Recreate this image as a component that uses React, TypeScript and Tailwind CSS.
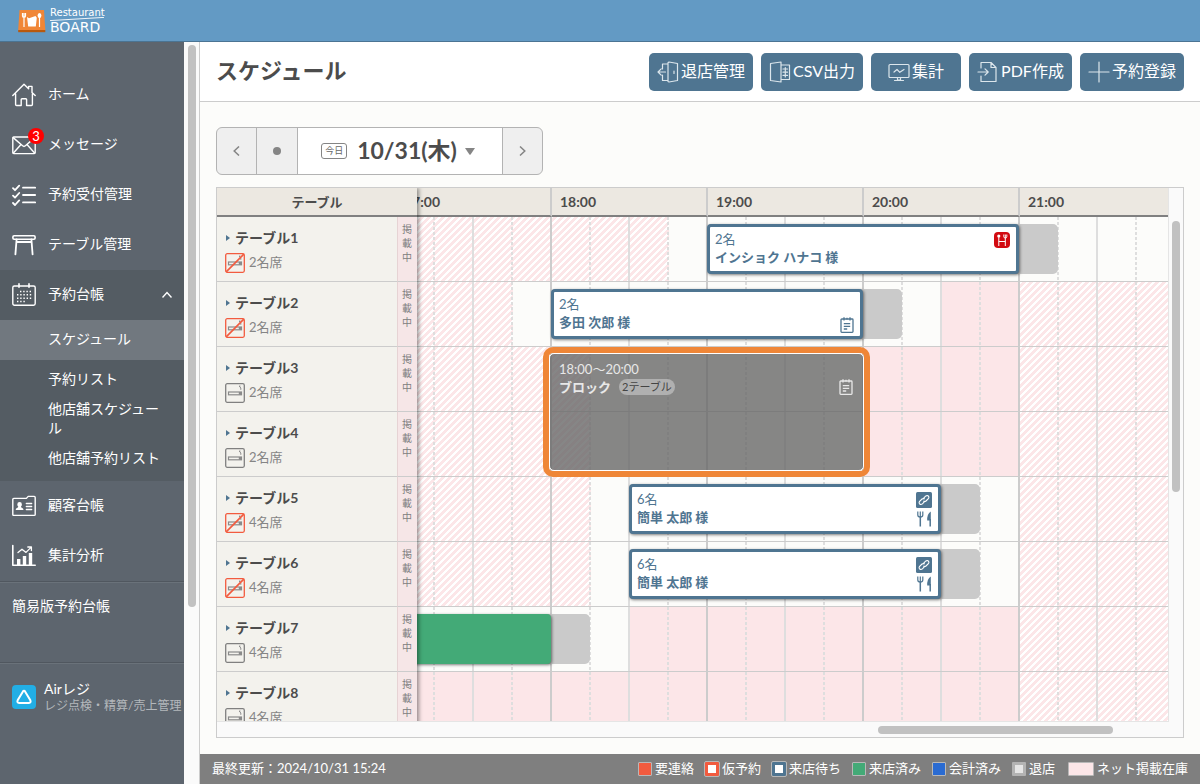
import React from "react";
import type { ReactNode } from "react";

type Fill = "none" | "stripe" | "open";

type Booking = {
  start: number;
  span: number;
  kind: "waiting" | "seated";
  people?: string;
  name?: string;
  marks?: ("gourmet" | "note" | "link" | "cutlery")[];
};

type TableRow = {
  name: string;
  seats: string;
  smoking: boolean;
  // Each entry is [number of quarter hours, fill], counted from 17:00.
  stock: [number, Fill][];
  booking?: Booking;
  block?: boolean;
};

const QUARTER = 39;
const HOURS = [17, 18, 19, 20, 21];

const ROWS: TableRow[] = [
  { name: "テーブル1", seats: "2名席", smoking: false, stock: [[7, "stripe"], [13, "none"]], booking: { start: 8, span: 8, kind: "waiting", people: "2名", name: "インショク ハナコ 様", marks: ["gourmet"] } },
  { name: "テーブル2", seats: "2名席", smoking: false, stock: [[3, "stripe"], [11, "none"], [2, "open"], [4, "stripe"]], booking: { start: 4, span: 8, kind: "waiting", people: "2名", name: "多田 次郎 様", marks: ["note"] } },
  { name: "テーブル3", seats: "2名席", smoking: true, stock: [[5, "stripe"], [7, "none"], [4, "open"], [4, "stripe"]], block: true },
  { name: "テーブル4", seats: "2名席", smoking: true, stock: [[5, "stripe"], [7, "none"], [4, "open"], [4, "stripe"]] },
  { name: "テーブル5", seats: "4名席", smoking: false, stock: [[5, "stripe"], [11, "none"], [4, "stripe"]], booking: { start: 6, span: 8, kind: "waiting", people: "6名", name: "簡単 太郎 様", marks: ["link", "cutlery"] } },
  { name: "テーブル6", seats: "4名席", smoking: false, stock: [[5, "stripe"], [11, "none"], [4, "stripe"]], booking: { start: 6, span: 8, kind: "waiting", people: "6名", name: "簡単 太郎 様", marks: ["link", "cutlery"] } },
  { name: "テーブル7", seats: "4名席", smoking: true, stock: [[6, "none"], [10, "open"], [4, "stripe"]], booking: { start: 0, span: 4, kind: "seated" } },
  { name: "テーブル8", seats: "4名席", smoking: true, stock: [[16, "open"], [4, "stripe"]] },
];

const FILL_CLASS: Record<Fill, string> = {
  none: "bg-[#fcfcfa]",
  open: "bg-[#fce6e8]",
  stripe:
    "bg-white bg-[linear-gradient(-45deg,#fce6e8_22%,transparent_22%,transparent_50%,#fce6e8_50%,#fce6e8_72%,transparent_72%)] bg-[length:7px_7px]",
};

function lineClass(i: number) {
  if (i % 4 === 3) return "bg-[#cccccc]";
  if (i % 2 === 1) return "bg-[#dedede]";
  return "bg-[repeating-linear-gradient(to_bottom,#dedede_0px,#dedede_3px,transparent_3px,transparent_5px)]";
}

function NavIcon({ children }: { children: ReactNode }) {
  return (
    <svg className="size-6 shrink-0" viewBox="0 0 24 24" fill="none" stroke="white" strokeWidth="1.4" strokeLinejoin="round" strokeLinecap="round" aria-hidden="true">
      {children}
    </svg>
  );
}

const HomeIcon = () => (
  <NavIcon>
    <path d="M.8 12.5 12 1.2l4.6 4.6V3.4H20v6l3.2 3.1M3.6 11v10.5q0 1 1 1h4.6v-6q0-.8.8-.8h3.8q.8 0 .8.8v6h4.8q1 0 1-1V11" />
  </NavIcon>
);
const MailIcon = () => (
  <NavIcon>
    <rect x=".8" y="4" width="22.4" height="16.6" rx="1" />
    <path d="m1.2 4.6 9.4 8.2q1.4 1.2 2.8 0l9.4-8.2M1.4 20l7.4-8.2M22.6 20l-7.4-8.2" />
  </NavIcon>
);
const ChecklistIcon = () => (
  <NavIcon>
    <path strokeWidth="1.8" d="M11 4.7h12.2M11 12h12.2M11 19.4h12.2M1 5.2l2 2 4.2-4.6M1 12.6l2 2 4.2-4.6M1 20l2 2 4.2-4.6" />
  </NavIcon>
);
const TableIcon = () => (
  <NavIcon>
    <rect x=".9" y="2.8" width="22.2" height="3.4" rx="1.2" strokeWidth="1.6" />
    <path strokeWidth="1.8" d="M4.6 6.4 3.4 21.4M19.4 6.4l1.2 15M4.4 9h15.2" />
  </NavIcon>
);
const CalendarIcon = () => (
  <NavIcon>
    <rect x=".8" y="3" width="22.4" height="19.2" rx="1.6" />
    <path strokeWidth="1.6" d="M7 .9v3.4M17 .9v3.4" />
    <path strokeWidth="1.5" strokeDasharray="1.4 1.8" strokeLinecap="butt" d="M8 8.4h12M5 11.8h15M5 15.2h15M5 18.6h8.6" />
  </NavIcon>
);
const CustomerIcon = () => (
  <NavIcon>
    <path d="M1.8 4.4h12.6l1.8-2h6q1 0 1 1v17q0 1-1 1H1.8q-1 0-1-1v-15q0-1 1-1Z" />
    <path strokeWidth="1.5" d="M14.4 9.6h5.2M14.4 12.6h5.2M14.4 15.6h5.2" />
    <path fill="white" stroke="none" d="M7.6 8q2.3 0 2.3 2.4 0 1.4-1 2.4.2 1 1.4 1.3 1.2.4 1.2 2H3.7q0-1.6 1.2-2 1.2-.3 1.4-1.3-1-1-1-2.4Q5.3 8 7.6 8Z" />
  </NavIcon>
);
const ChartIcon = () => (
  <NavIcon>
    <path d="M.8 1.5v19.8h22.4" strokeWidth="1.6" />
    <path d="m6 8.6 4-3.4 4 3.2 5-5M15.8 3h3.6v3.6" strokeWidth="1.3" />
    <path fill="white" stroke="none" d="M5 15h3.4v6H5zM10.8 12h3.4v9h-3.4zM16.8 9h3.4v12h-3.4z" />
  </NavIcon>
);

function ToolIcon({ children }: { children: ReactNode }) {
  return (
    <svg className="size-[22px] shrink-0" viewBox="0 0 22 22" fill="none" stroke="#dce6ec" strokeWidth="1.2" strokeLinejoin="round" strokeLinecap="round" aria-hidden="true">
      {children}
    </svg>
  );
}

const ExitIcon = () => (
  <ToolIcon>
    <path d="M11 1.8 12 1l8.500 1.500v17L12 21l-1-.5ZM11 3H5.500v5M11 19.500H5.500V14M8.500 11H1.200M4.200 7.800 1 11l3.200 3.200M17 10v2.500" />
  </ToolIcon>
);
const CsvIcon = () => (
  <ToolIcon>
    <path d="M1.500 2.500 12 1v20L1.500 19.500ZM12 4h8.500v14.500H12M14 8h4.500M14 11.200h4.500M14 14.400h4.500M16.300 6.500v9.500" />
  </ToolIcon>
);
const MonitorIcon = () => (
  <ToolIcon>
    <rect x="1" y="3.500" width="20" height="13" rx="1" />
    <path d="m6 11 3-2.500 2.800 2.800L16 8.500M9.500 16.800v2.200h3v-2.200M6.500 19.500h9" />
  </ToolIcon>
);
const PdfIcon = () => (
  <ToolIcon>
    <path d="M4 7V1.500h10L19 6.500v14H4V15M14 1.500v5h5M1 11h10M8 7.800 11.200 11 8 14.200" />
  </ToolIcon>
);
const PlusIcon = () => (
  <ToolIcon>
    <path d="M11 1v20M1 11h20" />
  </ToolIcon>
);

function SmokingIcon({ allowed }: { allowed: boolean }) {
  return (
    <svg className="size-5" viewBox="0 0 20 20" fill="none" role="img" aria-label={allowed ? "喫煙" : "禁煙"}>
      <rect x=".7" y=".7" width="18.6" height="18.6" rx="1.500" stroke={allowed ? "#808080" : "#f25b3f"} strokeWidth="1.300" />
      <rect x="3.500" y="9" width="13" height="2.800" stroke="#8a8a8a" strokeWidth="1.200" />
      <path d="M13.800 9h2.700v2.800h-2.700z" fill="#8a8a8a" />
      <path d="M15.400 3h-1.200l1.600 2v1.800" stroke="#8a8a8a" />
      {!allowed && <path d="M1.200 18.800 18.800 1.200" stroke="#f25b3f" strokeWidth="1.700" />}
    </svg>
  );
}

function NoteIcon({ className }: { className: string }) {
  return (
    <svg className={className} viewBox="0 0 14 16" fill="none" stroke="currentColor" strokeWidth="1.300" aria-hidden="true">
      <rect x="1" y="2" width="12" height="13.300" rx=".8" />
      <path d="M4 .3v3.200M7 .8v1.600M10 .3v3.200M3.800 6.600h6.400M3.800 9.300h6.400M3.800 12h3.400" />
    </svg>
  );
}

function Mark({ kind }: { kind: "gourmet" | "note" | "link" | "cutlery" }) {
  if (kind === "gourmet")
    return (
      <svg className="size-4" viewBox="0 0 16 16" aria-hidden="true">
        <rect width="16" height="16" rx="4" fill="#d20a11" />
        <path d="M4.800 5v9M11.300 6v8M4.800 9.500h6.500M9.800 2.500v2.200q0 1.300 1.500 1.300t1.500-1.300V2.500M11.300 2.500V6" fill="none" stroke="white" strokeWidth="1" />
        <circle cx="4.800" cy="4" r="1.600" fill="white" />
      </svg>
    );
  if (kind === "link")
    return (
      <svg className="size-4" viewBox="0 0 16 16" aria-hidden="true">
        <rect width="16" height="16" rx="1.500" fill="#4f7591" />
        <path d="M7 6.800 9.600 4.200q1.200-1 2.600-.4 1.300 1.200.4 2.600L10 9q-1.200.9-2.300.2M9 9.200l-2.600 2.600q-1.200 1-2.600.4-1.300-1.200-.4-2.600L6 7q1.200-.9 2.300-.2" fill="none" stroke="white" strokeWidth="1.100" strokeLinecap="round" />
      </svg>
    );
  if (kind === "cutlery")
    return (
      <svg className="size-4" viewBox="0 0 16 16" fill="none" stroke="#4f7591" aria-hidden="true">
        <path d="M1.800.5v3.600q0 2 2.500 2t2.500-2V.5M4.300.5v5.600" strokeWidth="1.200" />
        <path d="M4.300 6v9.600M14.200 8v7.600" strokeWidth="1.500" />
        <path d="M14.800.4v9.200h-3.600q-.4-6.800 3.600-9.200Z" fill="#4f7591" stroke="none" />
      </svg>
    );
  return <NoteIcon className="h-4 w-[14px]" />;
}

function BookingCard({ booking }: { booking: Booking }) {
  // The grey tail is the one quarter hour kept free after the booking.
  const total = booking.span + 1;
  const cardWidth = `${(booking.span / total) * 100}%`;
  return (
    <div className="absolute top-[7px] -left-px z-10 h-[50px]" style={{ width: `${total * 100}%` }}>
      <div className="h-full rounded-[5px] bg-[#cacaca]" />
      {booking.kind === "seated" ? (
        <button type="button" aria-label="来店済み" className="absolute inset-y-0 left-0 rounded bg-[#43aa77] shadow-[1px_1px_3px_rgba(0,0,0,0.5)]" style={{ width: cardWidth }} />
      ) : (
        <button
          type="button"
          className="absolute inset-y-0 left-0 flex justify-between rounded border-3 border-[#4f7591] bg-white pt-[3px] pr-[6px] pl-[5px] text-left text-[13px] leading-[18px] text-[#4f7591] shadow-[1px_1px_3px_rgba(0,0,0,0.5)]"
          style={{ width: cardWidth }}
        >
          <span className="flex flex-col">
            <span>{booking.people}</span>
            <span className="font-bold">{booking.name}</span>
          </span>
          <span className={booking.marks?.[0] === "note" ? "flex h-full flex-col justify-end pb-[3px]" : "flex flex-col gap-[3px] pt-[2px]"}>
            {booking.marks?.map((m) => <Mark key={m} kind={m} />)}
          </span>
        </button>
      )}
    </div>
  );
}

function BlockCard() {
  return (
    <div className="absolute top-0 -left-[9px] z-10 h-[130px] w-[calc(800%+15px)] rounded-[10px] border-6 border-[#ef8637]">
      <button
        type="button"
        className="flex size-full items-start justify-between rounded-[5px] border border-white bg-[rgba(104,104,104,0.8)] pt-[6px] pr-[10px] pl-[9px] text-left text-[13px] leading-[18px] text-[#e8e8e8]"
      >
        <span className="flex flex-col">
          <span>18:00〜20:00</span>
          <span className="flex items-center gap-2 font-bold">
            ブロック
            <span className="rounded-full bg-[#b0b0b0] px-[3px] text-[11px] leading-4 font-normal text-[#444444]">2テーブル</span>
          </span>
        </span>
        <NoteIcon className="mt-[19px] h-4 w-[14px]" />
      </button>
    </div>
  );
}

function TimelineRow({ row }: { row: TableRow }) {
  const fills = row.stock.flatMap(([n, fill]) => Array.from({ length: n }, () => fill));
  return (
    <tr>
      {fills.map((fill, i) => (
        <td key={i} className={`relative h-[65px] p-0 ${FILL_CLASS[fill]}`} style={{ backgroundPositionX: -i * QUARTER }}>
          <div className={`absolute inset-y-0 right-0 w-[2px] ${lineClass(i)}`} />
          <div className="absolute inset-x-0 bottom-0 h-px bg-[#cccccc]" />
          {row.booking?.start === i && <BookingCard booking={row.booking} />}
          {row.block && i === 4 && <BlockCard />}
        </td>
      ))}
    </tr>
  );
}

function NavItem({ icon, label, badge }: { icon: ReactNode; label: string; badge?: string }) {
  return (
    <a href="#" className="flex h-[50px] items-center gap-3 px-3">
      <span className="relative">
        {icon}
        {badge && <span className="absolute -top-[5px] -right-2 flex size-4 items-center justify-center rounded-full bg-[#ff0000] text-[13px] leading-4">{badge}</span>}
      </span>
      <span className="pb-[3px]">{label}</span>
    </a>
  );
}

function Sidebar() {
  return (
    <aside className="flex w-[200px] shrink-0 border-r border-[#cccccc] bg-[#fafafa]">
      <nav className="w-[184px] overflow-hidden bg-[#5d656e] pt-7 text-sm text-white">
        <NavItem icon={<HomeIcon />} label="ホーム" />
        <NavItem icon={<MailIcon />} label="メッセージ" badge="3" />
        <NavItem icon={<ChecklistIcon />} label="予約受付管理" />
        <NavItem icon={<TableIcon />} label="テーブル管理" />
        <div className="bg-[#545c63]">
          <button type="button" className="flex h-[50px] w-full items-center gap-3 px-3 text-left" aria-expanded="true">
            <CalendarIcon />
            <span className="flex-1 pb-[3px]">予約台帳</span>
            <svg className="h-2 w-[10px]" viewBox="0 0 10 8" fill="none" stroke="white" strokeWidth="1.400" aria-hidden="true">
              <path d="m.5 6.500 4.500-5 4.500 5" />
            </svg>
          </button>
          <a href="#" className="flex h-10 items-center bg-[#71787f] pb-[3px] pl-12">スケジュール</a>
          <div className="flex flex-col gap-[11px] pt-[9px] pr-5 pb-[14px] pl-12 leading-[19px]">
            <a href="#">予約リスト</a>
            <a href="#" className="break-all">他店舗スケジュール</a>
            <a href="#">他店舗予約リスト</a>
          </div>
        </div>
        <NavItem icon={<CustomerIcon />} label="顧客台帳" />
        <NavItem icon={<ChartIcon />} label="集計分析" />
        <div className="border-t border-[#50575f]">
          <a href="#" className="block h-20 border-t border-[#6a727a] px-3 pt-[13px]">簡易版予約台帳</a>
        </div>
        <div className="border-t border-[#50575f]">
          <a href="#" className="flex items-center gap-2 border-t border-[#6a727a] pt-4 pl-3">
            <svg className="size-6 shrink-0" viewBox="0 0 24 24" fill="none" aria-hidden="true">
              <rect width="24" height="24" rx="4" fill="#22aee5" />
              <path d="M10.800 6.700q1.200-1.700 2.400 0l5 8.300q1.300 2.700-1.400 2.900H7.200q-2.700-.2-1.400-2.900Z" stroke="white" strokeWidth="2" />
            </svg>
            <span className="flex flex-col whitespace-nowrap">
              <span className="leading-[17px]">Airレジ</span>
              <span className="text-xs leading-[17px] text-[#b4b8bc]">レジ点検・精算/売上管理</span>
            </span>
          </a>
        </div>
      </nav>
      <div className="flex flex-1 justify-center pt-[3px]">
        <div className="h-[76%] w-2 rounded-full bg-[#c1c1c1]" />
      </div>
    </aside>
  );
}

function ToolButton({ icon, label, className }: { icon: ReactNode; label: string; className: string }) {
  return (
    <button type="button" className={`flex h-[38px] items-center justify-center gap-[2px] rounded-[5px] bg-[#4f7591] text-base whitespace-nowrap text-white ${className}`}>
      {icon}
      <span className="pb-[2px]">{label}</span>
    </button>
  );
}

function DateBar() {
  return (
    <div className="flex h-12 w-[327px] shrink-0 overflow-hidden rounded-md border border-[#b3b3b3] bg-[#efefef]">
      <button type="button" aria-label="前日" className="flex w-10 items-center justify-center border-r border-[#b3b3b3]">
        <svg className="h-[10px] w-[7px]" viewBox="0 0 7 10" fill="none" stroke="#858585" strokeWidth="1.500" aria-hidden="true"><path d="M6 .5 1.200 5 6 9.500" /></svg>
      </button>
      <button type="button" aria-label="今日へ移動" className="flex w-[41px] items-center justify-center border-r border-[#b3b3b3]">
        <span className="size-2 rounded-full bg-[#858585]" />
      </button>
      <button type="button" className="flex flex-1 items-center justify-center gap-[10px] bg-white pr-1 text-[#4c4c4c]">
        <span className="rounded-[3px] border border-[#858585] px-[3px] text-[9px] leading-[14px] text-[#666666]">今日</span>
        <span className="pb-[2px] text-[23px] leading-7 font-bold">10/31(木)</span>
        <svg className="-ml-[2px] h-[7px] w-[10px]" viewBox="0 0 10 7" fill="#858585" aria-hidden="true"><path d="M0 0h10L5.600 6.400q-.6.700-1.200 0Z" /></svg>
      </button>
      <button type="button" aria-label="翌日" className="flex w-10 items-center justify-center border-l border-[#b3b3b3]">
        <svg className="h-[10px] w-[7px]" viewBox="0 0 7 10" fill="none" stroke="#858585" strokeWidth="1.500" aria-hidden="true"><path d="M1 .5 5.800 5 1 9.500" /></svg>
      </button>
    </div>
  );
}

function Schedule() {
  return (
    <section className="mt-3 mb-4 flex min-h-0 flex-1 flex-col border border-[#cccccc] bg-[#fafafa]">
      <div className="flex min-h-0 flex-1">
        <div className="flex min-w-0 flex-1 overflow-hidden border-r border-b border-[#e5e5e5]">
          <div className="relative z-20 w-[200px] shrink-0 self-start shadow-[2px_0_4px_rgba(0,0,0,0.4)]">
            <table className="w-full table-fixed border-separate border-spacing-0">
              <colgroup>
                <col className="w-[180px]" />
                <col className="w-5" />
              </colgroup>
              <thead>
                <tr>
                  <th colSpan={2} className="h-[29px] border-b-2 border-[#808080] bg-[#ece8e1] p-0 text-[13px] leading-[18px] text-[#4c4c4c]">テーブル</th>
                </tr>
              </thead>
              <tbody>
                {ROWS.map((row) => (
                  <tr key={row.name}>
                    <th scope="row" className="h-[65px] border-b border-[#cccccc] bg-[#f3f2ed] p-0 pt-3 pl-2 text-left align-top font-normal">
                      <a href="#" className="flex items-center gap-[5px] text-sm leading-[18px] font-bold text-[#4c4c4c]">
                        <svg className="ml-px h-[6px] w-1" viewBox="0 0 4 6" fill="#4f7591" aria-hidden="true"><path d="M0 0 4 3 0 6Z" /></svg>
                        {row.name}
                      </a>
                      <div className="mt-[6px] flex items-start gap-1 text-[13px] leading-[18px] text-[#858585]">
                        <SmokingIcon allowed={row.smoking} />
                        {row.seats}
                      </div>
                    </th>
                    <td className="h-[65px] border-b border-l border-b-[#cccccc] border-l-[#e6d3d4] bg-[#f6e6e7] px-1 pt-[5px] align-top text-[10px] leading-[14px] text-[#808080]">
                      <span className="block w-[10px] break-all">掲載中</span>
                    </td>
                  </tr>
                ))}
              </tbody>
            </table>
          </div>
          <div className="min-w-0 flex-1 overflow-hidden">
            <table className="-ml-[21px] w-[calc(100%+21px)] min-w-[780px] table-fixed border-separate border-spacing-0">
              <thead>
                <tr>
                  {HOURS.map((h) => (
                    <th key={h} colSpan={4} scope="col" className="h-[29px] border-r-2 border-b-2 border-r-[#cccccc] border-b-[#808080] bg-[#ece8e1] p-0 pl-2 text-left text-sm leading-[18px] text-[#4c4c4c]">
                      {h}:00
                    </th>
                  ))}
                </tr>
              </thead>
              <tbody>
                {ROWS.map((row) => <TimelineRow key={row.name} row={row} />)}
              </tbody>
            </table>
          </div>
        </div>
        <div className="w-[14px] shrink-0 px-[3px] pt-[33px]">
          <div className="h-[54%] w-2 rounded-full bg-[#c1c1c1]" />
        </div>
      </div>
      <div className="flex h-[15px] shrink-0 items-center justify-end pr-[70px]">
        <div className="h-2 w-[235px] rounded-full bg-[#c1c1c1]" />
      </div>
    </section>
  );
}

const LEGEND = [
  { label: "要連絡", swatch: "w-[14px] border border-[#b8b8b8] bg-[#f25b3f]" },
  { label: "仮予約", swatch: "w-[14px] border-3 border-[#f25b3f] bg-white outline outline-[#b8b8b8]" },
  { label: "来店待ち", swatch: "w-[14px] border-3 border-[#4f7591] bg-white outline outline-[#b8b8b8]" },
  { label: "来店済み", swatch: "w-[14px] border border-[#b8b8b8] bg-[#43aa77]" },
  { label: "会計済み", swatch: "w-[14px] border border-[#b8b8b8] bg-[#2a6bd2]" },
  { label: "退店", swatch: "w-[14px] border-3 border-[#b3b3b3] bg-[#e6e6e6]" },
  { label: "ネット掲載在庫", swatch: "ml-[2px] w-[26px] border border-[#b8b8b8] bg-[#fce6e8]" },
];

export default function App() {
  return (
    <div className="flex h-screen flex-col overflow-hidden bg-[#fcfcfa] font-[Lato,'Noto_Sans_CJK_JP',sans-serif]">
      <header className="flex h-[42px] shrink-0 items-center gap-1 border-b border-[#4b7493] bg-[#639ac4] pl-[18px]">
        <svg className="h-6 w-7" viewBox="0 0 28 24" aria-hidden="true">
          <path d="M1.500 1h24.500l1.300 20H.2Z" fill="#f08637" />
          <path d="M.2 21h27.100v2.200H.2Z" fill="#b8590f" />
          <path d="M4.500 4v3q0 1.500 1.500 1.500T7.500 7V4M6 4v14M21.500 8v10" fill="none" stroke="white" strokeWidth="1.200" />
          <ellipse cx="21.500" cy="6.500" rx="1.900" ry="2.600" fill="white" />
          <path d="m9 8 2 1.200L17.500 7l1.300 1.800-1 8.700h-7.600Z" fill="white" />
        </svg>
        <div className="flex w-[54px] flex-col font-['DejaVu_Sans'] text-white">
          <span className="text-[10px] leading-[9px]">Restaurant</span>
          <svg className="h-1 w-full" viewBox="0 0 54 4" preserveAspectRatio="none" aria-hidden="true"><path d="M0 3.600 54 .4" stroke="white" strokeWidth=".9" /></svg>
          <span className="text-sm leading-3">BOARD</span>
        </div>
      </header>
      <div className="flex min-h-0 flex-1">
        <Sidebar />
        <div className="flex min-w-0 flex-1 flex-col">
          <div className="flex h-[60px] shrink-0 items-center justify-between border-b border-[#cccccc] bg-white px-4">
            <h1 className="pb-[2px] text-[22px] font-bold text-[#4c4c4c]">スケジュール</h1>
            <div className="flex gap-2">
              <ToolButton icon={<ExitIcon />} label="退店管理" className="w-[104px]" />
              <ToolButton icon={<CsvIcon />} label="CSV出力" className="w-[102px]" />
              <ToolButton icon={<MonitorIcon />} label="集計" className="w-[90px]" />
              <ToolButton icon={<PdfIcon />} label="PDF作成" className="w-[103px]" />
              <ToolButton icon={<PlusIcon />} label="予約登録" className="w-[104px]" />
            </div>
          </div>
          <main className="flex min-h-0 flex-1 flex-col px-4 pt-[25px]">
            <DateBar />
            <Schedule />
          </main>
          <footer className="flex h-[30px] shrink-0 items-center justify-between bg-[#7f7f7f] px-3 text-[13px] whitespace-nowrap text-white">
            <span>最終更新：2024/10/31 15:24</span>
            <ul className="flex gap-[11px]">
              {LEGEND.map((l) => (
                <li key={l.label} className="flex items-center gap-[3px]">
                  <span className={`h-[14px] rounded-[1px] ${l.swatch}`} />
                  {l.label}
                </li>
              ))}
            </ul>
          </footer>
        </div>
      </div>
    </div>
  );
}
